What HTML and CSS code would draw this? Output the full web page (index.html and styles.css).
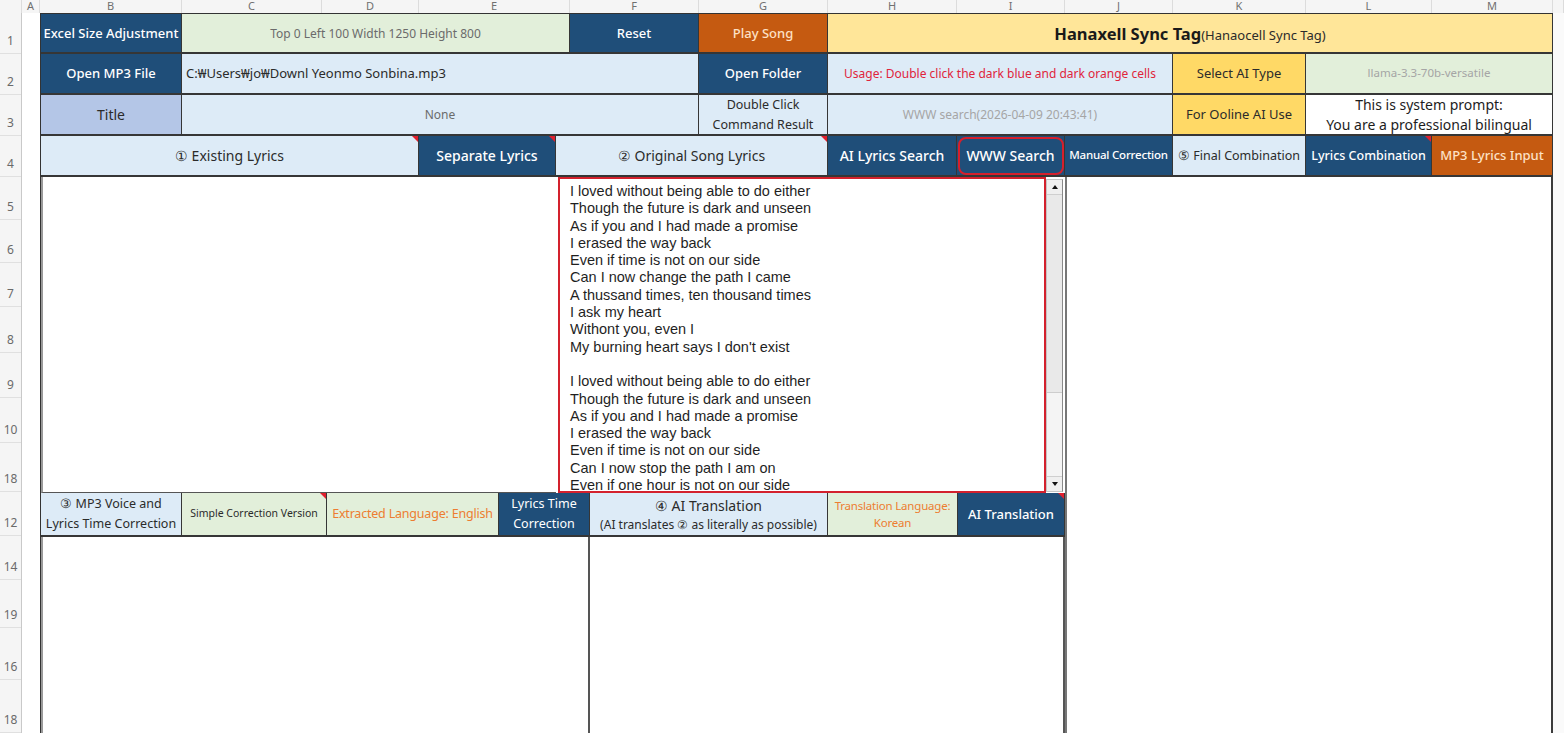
FILE: index.html
```html
<!DOCTYPE html>
<html lang="en">
<head>
<meta charset="UTF-8" />
<title>Hanaxell Sync Tag</title>
<link rel="stylesheet" href="styles.css">
</head>
<body>

<!-- column letters -->
<div class="colheads">
  <div></div>
  <div>A</div><div>B</div><div>C</div><div>D</div><div>E</div><div>F</div><div>G</div>
  <div>H</div><div>I</div><div>J</div><div>K</div><div>L</div><div>M</div><div></div>
</div>

<div class="sheet">
  <div class="rowheads">
    <div>1</div><div>2</div><div>3</div><div>4</div><div>5</div><div>6</div><div>7</div><div>8</div>
    <div>9</div><div>10</div><div>18</div><div>12</div><div>14</div><div>19</div><div>16</div><div>18</div>
  </div>
  <div class="col-a"></div>

  <div class="grid">
    <div class="top">
      <div class="row r1">
        <div class="cell dark">Excel Size Adjustment</div>
        <div class="cell green small grey">Top 0 Left 100 Width 1250 Height 800</div>
        <div class="cell dark">Reset</div>
        <div class="cell orange">Play Song</div>
        <div class="cell yellow title"><b>Hanaxell Sync Tag</b><span>(Hanaocell Sync Tag)</span></div>
      </div>
      <div class="row r23">
        <div class="cell dark">Open MP3 File</div>
        <div class="cell lblue left">C:₩Users₩jo₩Downl Yeonmo Sonbina.mp3</div>
        <div class="cell dark">Open Folder</div>
        <div class="cell lblue red-text">Usage: Double click the dark blue and dark orange cells</div>
        <div class="cell gold">Select AI Type</div>
        <div class="cell green tiny pale">llama-3.3-70b-versatile</div>
      </div>
      <div class="row r23">
        <div class="cell mblue big">Title</div>
        <div class="cell lblue small grey">None</div>
        <div class="cell lblue two">Double Click<br>Command Result</div>
        <div class="cell lblue small pale">WWW search(2026-04-09 20:43:41)</div>
        <div class="cell gold">For Ooline AI Use</div>
        <div class="cell white prompt">This is system prompt:<br>You are a professional bilingual</div>
      </div>
      <div class="row r4">
        <div class="cell lblue big note">① Existing Lyrics</div>
        <div class="cell dark big note">Separate Lyrics</div>
        <div class="cell lblue big note">② Original Song Lyrics</div>
        <div class="cell dark big">AI Lyrics Search</div>
        <div class="cell dark big ring">WWW Search</div>
        <div class="cell dark narrow">Manual Correction</div>
        <div class="cell lblue mid">⑤ Final Combination</div>
        <div class="cell dark mid note">Lyrics Combination</div>
        <div class="cell orange">MP3 Lyrics Input</div>
      </div>
    </div>

    <div class="lower">
      <div class="lower-left">
        <div class="band">
          <div class="panel"></div>
          <div></div>
          <div class="lyrics">I loved without being able to do either
Though the future is dark and unseen
As if you and I had made a promise
I erased the way back
Even if time is not on our side
Can I now change the path I came
A thussand times, ten thousand times
I ask my heart
Withont you, even I
My burning heart says I don't exist

I loved without being able to do either
Though the future is dark and unseen
As if you and I had made a promise
I erased the way back
Even if time is not on our side
Can I now stop the path I am on
Even if one hour is not on our side</div>
          <div class="scrollbar">
            <div class="sb-btn up"></div>
            <div class="thumb"></div>
            <div class="track"></div>
            <div class="sb-btn down"></div>
          </div>
          <div></div>
        </div>

        <div class="row r12">
          <div class="cell lblue two">③ MP3 Voice and<br>Lyrics Time Correction</div>
          <div class="cell green micro note">Simple Correction Version</div>
          <div class="cell green orange-text">Extracted Language: English</div>
          <div class="cell dark two">Lyrics Time<br>Correction</div>
          <div class="cell lblue trans"><span class="big">④ AI Translation</span><span class="small">(AI translates ② as literally as possible)</span></div>
          <div class="cell green orange-text lang">Translation Language:<br>Korean</div>
          <div class="cell dark note">AI Translation</div>
        </div>

        <div class="bottoms">
          <div class="panel"></div>
          <div class="panel"></div>
        </div>
      </div>
      <div class="right-panel"></div>
    </div>
  </div>
  <div class="gutter"></div>
</div>

</body>
</html>
```

FILE: styles.css
```css
/* Reset */
* {
  box-sizing: border-box;
}
html, body {
  margin: 0;
  padding: 0;
}
body {
  width: 1564px;
  height: 733px;
  overflow: hidden;
  background: #fff;
  font-family: "Noto Sans", "Liberation Sans", sans-serif;
  font-size: 13px;
  color: #2b2b2b;
}

/* sheet headers */
.colheads {
  display: grid;
  grid-template-columns: 22px 18px 142px 140px 97px 151px 129px 129px 129px 108px 108px 133px 126px 121px 1fr;
  height: 13px;
  background: #f5f5f5;
}
.colheads div {
  font-size: 11px;
  line-height: 12px;
  color: #707070;
  text-align: center;
  border-right: 1px solid #dcdcdc;
}
.sheet {
  display: flex;
  height: 720px;
}
.rowheads {
  width: 22px;
  display: grid;
  grid-template-rows: 41px 41px 41px 41px 43px 43px 44px 46px 45px 45px 49px 44px 44px 48px 52px 1fr;
  background: #f5f5f5;
  border-right: 1px solid #c9c9c9;
}
.rowheads div {
  display: flex;
  align-items: flex-end;
  justify-content: center;
  padding-bottom: 4px;
  font-size: 12px;
  color: #6a6a6a;
  border-bottom: 1px solid #e0e0e0;
}
.col-a {
  width: 18px;
}
.gutter {
  flex: 1;
  background: #fafafa;
}
.grid {
  width: 1513px;
  display: flex;
  flex-direction: column;
  border-left: 1px solid #333;
}

/* cell rows */
.top {
  border-top: 1px solid #333;
}
.row {
  display: grid;
  height: 41px;
  border-bottom: 2px solid #363636;
}
.r1 {
  height: 40px;
  grid-template-columns: 141px 388px 129px 129px 1fr;
}
.r23 {
  grid-template-columns: 141px 517px 129px 345px 133px 1fr;
}
.r4 {
  grid-template-columns: 378px 137px 272px 129px 108px 108px 133px 126px 1fr;
}
.r12 {
  height: 44px;
  grid-template-columns: 141px 145px 172px 91px 238px 130px 1fr;
}
.cell {
  position: relative;
  display: flex;
  align-items: center;
  justify-content: center;
  text-align: center;
  padding: 0 2px;
  line-height: 1.25;
  white-space: nowrap;
  overflow: hidden;
  border-right: 1px solid #363636;
}

/* fills */
.dark {
  background: #1f4e79;
  color: #fff;
  font-size: 13px;
  font-weight: 500;
}
.orange {
  background: #c55a11;
  color: #fde1c6;
  font-size: 13px;
  font-weight: 500;
}
.green { background: #e2efda; }
.lblue { background: #ddebf7; }
.mblue { background: #b4c6e7; }
.yellow { background: #ffe699; }
.gold { background: #ffd966; font-size: 13px; }
.white { background: #fff; }

/* text variants */
.big { font-size: 14px; }
.mid { font-size: 12.5px; }
.small { font-size: 12px; }
.tiny { font-size: 11.5px; }
.micro { font-size: 10.5px; }
.narrow { font-size: 11.5px; letter-spacing: -0.2px; }
.grey { color: #6b6b6b; }
.pale { color: #a5a5a5; }
.left {
  justify-content: flex-start;
  padding-left: 4px;
}
.red-text {
  color: #e0243b;
  font-size: 12px;
}
.orange-text {
  color: #ed7d31;
  font-size: 12.5px;
  letter-spacing: -0.2px;
}
.lang {
  font-size: 11.5px;
  line-height: 17px;
}
.two {
  font-size: 12.5px;
  line-height: 20px;
}
.dark.two {
  font-weight: 400;
}
.title {
  align-items: baseline;
  padding-top: 10px;
  font-size: 13px;
}
.title b {
  font-size: 16.5px;
  color: #1a1a1a;
}
.prompt {
  align-items: flex-start;
  font-size: 14px;
  line-height: 20px;
  color: #1d1d1d;
  padding-top: 0;
}
.trans {
  flex-direction: column;
  line-height: 19px;
  padding-top: 1px;
}

/* red comment marker */
.note::after {
  content: "";
  position: absolute;
  top: 0;
  right: 0;
  border-top: 6px solid #e0202e;
  border-left: 6px solid transparent;
}

/* highlighted button */
.ring::before {
  content: "";
  position: absolute;
  top: 1px;
  left: 1px;
  right: 0;
  bottom: 0;
  border: 2px solid #d61f2c;
  border-radius: 8px;
}

/* lower area */
.lower {
  flex: 1;
  display: grid;
  grid-template-columns: 1024px 1fr;
}
.lower-left {
  display: flex;
  flex-direction: column;
}
.band {
  height: 316px;
  display: grid;
  grid-template-columns: 515px 2px 488px 17px 2px;
}
.panel {
  background: #fff;
  border-left: 2px solid #9a9a9a;
  border-right: 1px solid #555;
}
.band .panel {
  border-right: none;
  border-bottom: 1px solid #555;
}
.lyrics {
  border: 2px solid #d3212d;
  padding: 4px 10px 0;
  font-family: "Liberation Sans", Arial, sans-serif;
  font-size: 14.5px;
  line-height: 17.3px;
  color: #1f1f1f;
  white-space: pre-line;
  overflow: hidden;
  background: #fff;
}
.scrollbar {
  display: flex;
  flex-direction: column;
  margin: 2px 0 1px;
  background: #f4f4f4;
  border: 1px solid #c4c4c4;
  border-right-color: #8a8a8a;
}
.sb-btn {
  height: 15px;
  display: flex;
  align-items: center;
  justify-content: center;
  background: #efefef;
  border-bottom: 1px solid #cfcfcf;
}
.sb-btn.down {
  border-bottom: none;
  border-top: 1px solid #cfcfcf;
}
.up::before {
  content: "";
  border-left: 3px solid transparent;
  border-right: 3px solid transparent;
  border-bottom: 4px solid #111;
}
.down::before {
  content: "";
  border-left: 3px solid transparent;
  border-right: 3px solid transparent;
  border-top: 4px solid #111;
}
.thumb {
  height: 198px;
  background: #e9e9e9;
  border-bottom: 1px solid #cdcdcd;
}
.track {
  flex: 1;
}
.bottoms {
  flex: 1;
  display: grid;
  grid-template-columns: 549px 1fr;
}
.bottoms .panel {
  border-right: 2px solid #555;
}
.bottoms .panel + .panel {
  border-left: none;
}
.right-panel {
  background: #fff;
  border-left: 2px solid #777;
  border-right: 2px solid #3c3c3c;
}
```
